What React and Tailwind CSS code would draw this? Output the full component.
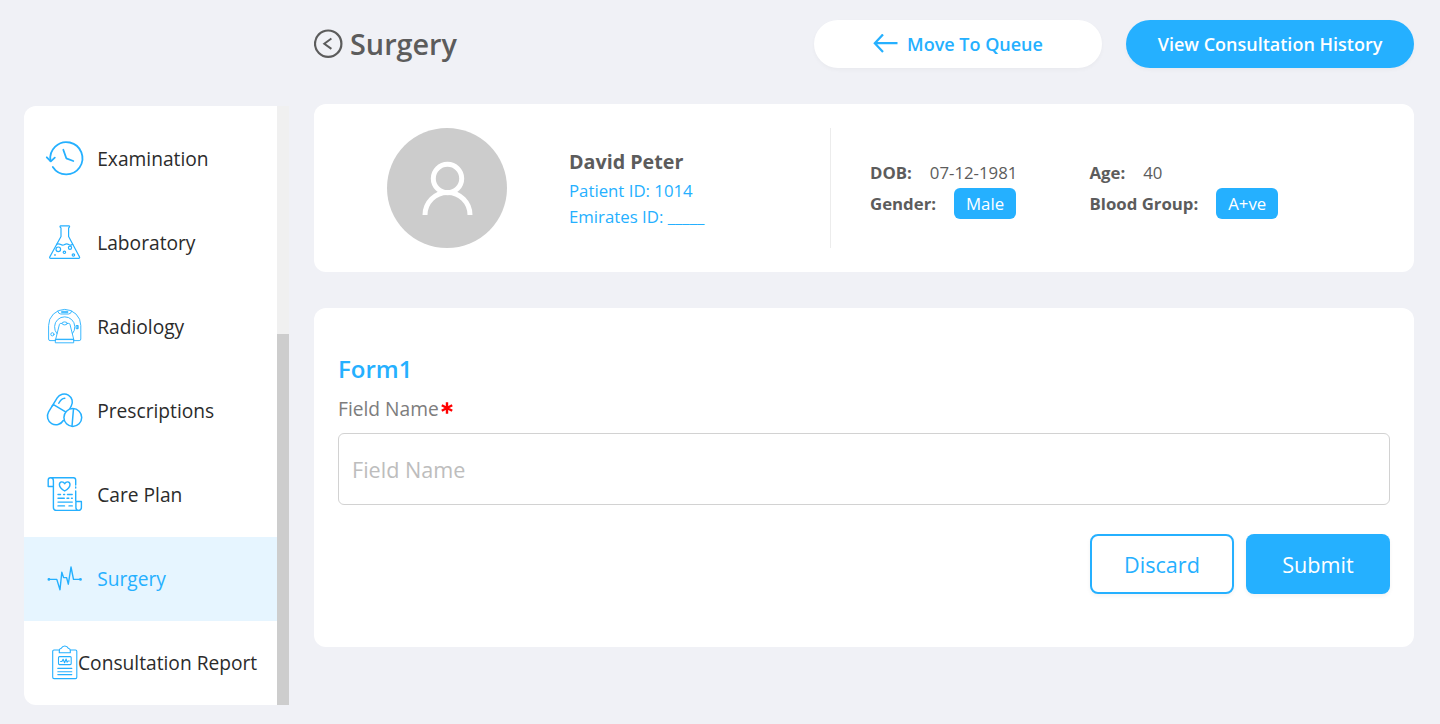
import React from "react";

const stroke = {
  fill: "none",
  stroke: "#25b0ff",
  strokeLinecap: "round",
  strokeLinejoin: "round",
};

function Glyph({ width = 1, children }) {
  return (
    <svg viewBox="0 0 42 42" className="h-[42px] w-[42px] shrink-0" {...stroke} strokeWidth={width}>
      {children}
    </svg>
  );
}

const icons = {
  examination: (
    <Glyph width={1.8}>
      <path d="M6.500 23A16.100 16.100 0 1 1 8.800 28.900" />
      <path d="M2.800 19.300l4 4.100 4-3.700M19.300 11.800L22.300 20.300l7 2.700" />
    </Glyph>
  ),
  laboratory: (
    <Glyph width={1.2}>
      <path d="M16.400 3.800h8.800q1 1.100-.6 2.200v8.500l10.900 20.400q.6 1.500-1 1.500H6.800q-1.600 0-1-1.500L17 14.500V6q-1.600-1.100-.6-2.200z" />
      <path d="M12.700 22.300q2-1 4 .2t4-.1 4 .1 4-.2" />
      <circle cx="14.300" cy="27.300" r="2.300" />
      <circle cx="26" cy="25.700" r="1.600" />
      <circle cx="20.400" cy="30.300" r="1.200" />
      <circle cx="29.400" cy="33" r="1.200" />
      <circle cx="11" cy="33" r=".3" />
    </Glyph>
  ),
  radiology: (
    <Glyph width={0.9}>
      <path d="M11.600 34.600H6q-1.400 0-1.400-1.600V19.500a16.100 16.100 0 0 1 32.200 0V33q0 1.600-1.600 1.600h-5.400" />
      <path d="M12.800 27.500a10.200 10.200 0 1 1 15.800 0" />
      <path d="M11.700 33.200L15.400 18.500q.3-1.100 1.300-1.100h8q1 0 1.300 1.100l3.700 14.700zM11.700 33.200h18v3.600h-18z" />
      <ellipse cx="20.700" cy="17.400" rx="2.600" ry="1.500" fill="#fff" />
      <path d="M13.800 5.200q.6 2.800 3 2.800h7.800q2.400 0 3-2.800M17.600 5.400h6.200M17.600 6.600h6.200" />
      <circle cx="8.400" cy="28.300" r="1.600" />
      <path d="M32.500 19.500h1.700v3.200h-1.700zM33.300 19.500v3.200" />
    </Glyph>
  ),
  prescriptions: (
    <Glyph width={1.5}>
      <path d="M4.600 21.900L13.200 7.900A8.100 8.100 0 0 1 27.200 16.200l-1.300 2.300M19.300 30.500A8.100 8.100 0 0 1 4.600 21.900" />
      <path d="M8.100 16l1.800-1.200 11.300 6.900M14.800 13.200q2.300-4.800 6-5" />
      <circle cx="28.800" cy="27.500" r="8.900" />
      <path d="M29.500 18.800L28 36.200" />
    </Glyph>
  ),
  carePlan: (
    <Glyph width={1.4}>
      <path d="M6.500 3.700h23q2.200 0 2.200 2.200v5.200M6.500 3.700q-2.300 0-2.300 2.400v6.400h5.200M6.500 3.700q2.900 0 2.900 3v26.700q0 3 3 3h22q3 0 3-3V27.500H31.900v5.900q0 3 2.700 3M31.700 17v10M31.700 13v1" />
      <path d="M20.700 17q-5.300-3.300-5.300-6.300 0-2.500 2.300-2.800 2-.1 3 1.900 1-2 3-1.900 2.300.3 2.300 2.800 0 3-5.300 6.300z" />
      <path d="M14 20.500h2.500M19.600 20.500h1M23.500 20.500h4.700M14 24.300h6.300M23 24.300h1.800M27.500 24.300h.8M14 28.100h14.300M14 31.900h6.500M25 31.900h3.300" />
    </Glyph>
  ),
  surgery: (
    <Glyph width={1.4}>
      <path d="M4.800 21.400h8L16 31.700l1.800-17.500 1.800 5.400h3L24.300 26.200 27 9l2.500 12.400h7" />
      <circle cx="4.900" cy="21.400" r=".7" />
      <circle cx="36.500" cy="21.400" r=".7" />
    </Glyph>
  ),
  report: (
    <svg viewBox="0 0 33 42" className="h-[42px] w-[33px] shrink-0 overflow-visible" {...stroke} strokeWidth={1.1}>
      <path d="M15.200 8H10q-1.300 0-1.300 1.300v26q0 1.300 1.300 1.300h21.500q1.300 0 1.300-1.300v-26Q32.800 8 31.500 8h-5.100" />
      <path d="M15.300 10.700V8.500q0-1.800 2-2.200 1.100-2.300 3.500-2.300t3.500 2.300q2 .4 2 2.200v2.200z" />
      <rect x="14.500" y="14.600" width="12.700" height="8" rx="1" />
      <path d="M16.600 19.500h1.300l1.200-2.300 1.500 3.600 1.500-3.800 1 3.300.9-1.300h1.300M13.800 26.400h14M13.800 29.700h14M13.800 32.600h14" />
    </svg>
  ),
};

const menu = [
  { label: "Examination", icon: icons.examination },
  { label: "Laboratory", icon: icons.laboratory },
  { label: "Radiology", icon: icons.radiology },
  { label: "Prescriptions", icon: icons.prescriptions },
  { label: "Care Plan", icon: icons.carePlan },
  { label: "Surgery", icon: icons.surgery, active: true },
  { label: "Consultation Report", icon: icons.report, tight: true },
];

function Sidebar() {
  return (
    <aside className="mt-[106px] flex h-[599px] w-[265px] shrink-0 overflow-hidden rounded-l-xl bg-white">
      <nav className="w-[253px] pt-[11px]">
        {menu.map((m) => (
          <a
            key={m.label}
            className={`flex h-[84px] items-center pl-5 text-[19.2px] whitespace-nowrap ${
              m.tight ? "gap-[1px]" : "gap-[11.2px]"
            } ${m.active ? "bg-[#e6f5ff] text-[#25b0ff]" : "text-[#2b2b2b]"}`}
          >
            {m.icon}
            <span>{m.label}</span>
          </a>
        ))}
      </nav>
      <div className="w-3 bg-[#f0f0f0] pt-[228px]">
        <div className="h-[371px] bg-[#cdcdcd]" />
      </div>
    </aside>
  );
}

function Header() {
  return (
    <header className="flex h-12 items-center">
      <svg viewBox="0 0 30 30" className="h-[30px] w-[30px]" fill="none" stroke="#5c5c5c" strokeWidth="2.200">
        <circle cx="14.200" cy="14.700" r="13.200" />
        <path d="M17.400 9.500L10.300 14.700l7.100 5.200" strokeWidth="2" />
      </svg>
      <h1 className="ml-[6px] text-[28.800px] leading-none font-semibold text-[#5c5c5c]">Surgery</h1>
      <button className="ml-auto flex h-12 w-[288px] items-center justify-center gap-[9px] rounded-full bg-white text-[18px] font-semibold text-[#25b0ff] shadow-[0_2px_4px_rgba(0,0,0,0.03)]">
        <svg viewBox="0 0 25 20" className="h-5 w-[25px]" fill="none" stroke="#25b0ff" strokeWidth="2.200">
          <path d="M10 .4L1.800 9.200 10 18M1.800 9.200H24.500" />
        </svg>
        Move To Queue
      </button>
      <button className="ml-6 h-12 w-[288px] rounded-full bg-[#25b0ff] text-[18px] font-semibold text-white shadow-[0_2px_4px_rgba(0,0,0,0.03)]">
        View Consultation History
      </button>
    </header>
  );
}

function PatientCard() {
  return (
    <section className="mt-9 flex h-[168px] items-center rounded-xl bg-white text-[16.800px] text-[#5c5c5c]">
      <div className="ml-[73px] flex h-[120px] w-[120px] items-center justify-center rounded-full bg-[#cccccc]">
        <svg viewBox="0 0 120 120" className="h-[120px] w-[120px]" fill="none" stroke="#fff" strokeWidth="5">
          <circle cx="60.500" cy="50.500" r="14.200" />
          <path d="M38 87a22.500 22.500 0 0 1 45 0" />
        </svg>
      </div>
      <div className="ml-[62px] w-[261px] pt-0.5">
        <h2 className="text-[19.700px] leading-[26px] font-bold">David Peter</h2>
        <p className="mt-[3px] leading-[26px] text-[#25b0ff]">Patient ID: 1014</p>
        <p className="leading-[26px] text-[#25b0ff]">Emirates ID: _____</p>
      </div>
      <div className="h-[120px] w-px bg-[#ececec]" />
      <div className="ml-[39px] w-[219.500px]">
        <div className="flex h-[31px] items-center gap-[18px]">
          <b>DOB:</b>
          <span>07-12-1981</span>
        </div>
        <div className="flex h-[31px] items-center gap-[18px]">
          <b>Gender:</b>
          <span className="flex h-[31px] w-[62px] items-center justify-center rounded-md bg-[#25b0ff] text-white">Male</span>
        </div>
      </div>
      <div>
        <div className="flex h-[31px] items-center gap-[18px]">
          <b>Age:</b>
          <span>40</span>
        </div>
        <div className="flex h-[31px] items-center gap-[18px]">
          <b>Blood Group:</b>
          <span className="flex h-[31px] w-[62px] items-center justify-center rounded-md bg-[#25b0ff] text-white">A+ve</span>
        </div>
      </div>
    </section>
  );
}

function FormCard() {
  return (
    <section className="mt-9 h-[339px] rounded-xl bg-white px-6 pt-11">
      <h3 className="text-[24px] leading-[33px] font-semibold text-[#25b0ff]">Form1</h3>
      <label className="mt-[10px] flex h-7 items-center text-[19.200px] text-[#7d7d7d]">
        Field Name
        <svg viewBox="0 0 12 12" className="mt-[-3px] ml-[2px] h-3 w-3" fill="none" stroke="#ff0000" strokeWidth="2.400">
          <path d="M6 .2v11.600M.8 3.200l10.400 5.600M11.200 3.200L.8 8.800" />
        </svg>
      </label>
      <input
        placeholder="Field Name"
        className="mt-[10px] block h-[72px] w-full rounded-md border border-[#d2d2d2] bg-white px-[13px] text-[21.600px] placeholder:text-[#bdbdbd]"
      />
      <div className="mt-[29px] flex justify-end gap-3 text-[21.600px]">
        <button className="h-[60px] w-36 rounded-lg border-2 border-[#25b0ff] bg-white pt-0.5 text-[#25b0ff] shadow-[0_2px_4px_rgba(0,0,0,0.05)]">
          Discard
        </button>
        <button className="h-[60px] w-36 rounded-lg bg-[#25b0ff] pt-0.5 text-white shadow-[0_2px_4px_rgba(0,0,0,0.05)]">
          Submit
        </button>
      </div>
    </section>
  );
}

export default function App() {
  return (
    <div className="flex h-[724px] w-[1440px] overflow-hidden bg-[#f0f1f6] pl-6 font-['Open_Sans',sans-serif]">
      <Sidebar />
      <main className="ml-[25px] w-[1100px] pt-5">
        <Header />
        <PatientCard />
        <FormCard />
      </main>
    </div>
  );
}
